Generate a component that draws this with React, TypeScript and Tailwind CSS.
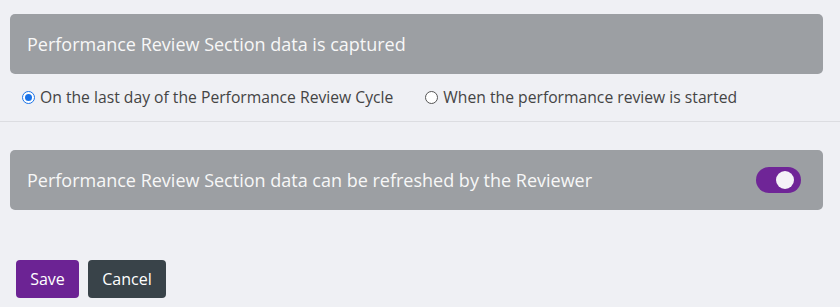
import React from "react";

export default function App() {
  return (
    <div className="min-h-[307px] w-full bg-[#eff0f4] pt-[14px] text-[#444]" style={{ fontFamily: '"Open Sans", "Noto Sans", sans-serif' }}>
      <div className="px-[10px] pr-[17px]">
        <div className="flex h-[60px] items-center rounded-[5px] bg-[#9c9fa3] px-[17px] text-[18px] text-[#f7f7f7]">
          Performance Review Section data is captured
        </div>
        <div className="flex h-[47px] items-center gap-[32px] pl-[12px] text-[15.7px] text-[#444]">
          <label className="flex items-center gap-[5px]">
            <span className="flex h-[13px] w-[13px] items-center justify-center rounded-full border-[1.5px] border-[#1a73e8] bg-white">
              <span className="h-[7px] w-[7px] rounded-full bg-[#1a73e8]" />
            </span>
            On the last day of the Performance Review Cycle
          </label>
          <label className="flex items-center gap-[5px]">
            <span className="h-[13px] w-[13px] rounded-full border border-[#555] bg-white" />
            When the performance review is started
          </label>
        </div>
      </div>
      <div className="h-px w-full bg-[#dcdde1]" />
      <div className="px-[10px] pr-[17px] pt-[28px]">
        <div className="flex h-[60px] items-center justify-between rounded-[5px] bg-[#9c9fa3] pl-[17px] pr-[22px] text-[18px] text-[#f7f7f7]">
          <span>Performance Review Section data can be refreshed by the Reviewer</span>
          <span className="flex h-[26px] w-[45px] items-center justify-end rounded-full bg-[#6f2597] pr-[7px]">
            <span className="h-[18px] w-[18px] rounded-full bg-[#f4f3f7]" />
          </span>
        </div>
      </div>
      <div className="flex gap-[9px] px-[16px] pt-[50px]">
        <button className="flex h-[38px] w-[63px] items-center justify-center rounded-[4px] bg-[#6c2394] text-[16px] text-white">
          Save
        </button>
        <button className="flex h-[38px] w-[78px] items-center justify-center rounded-[4px] bg-[#394349] text-[16px] text-white">
          Cancel
        </button>
      </div>
    </div>
  );
}
